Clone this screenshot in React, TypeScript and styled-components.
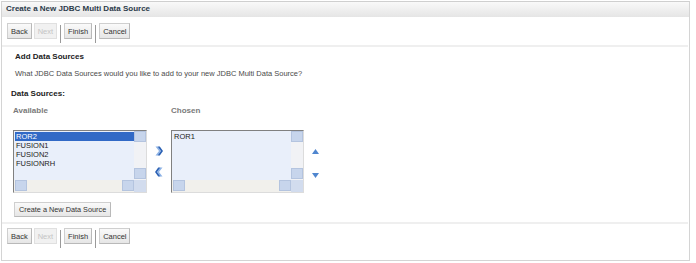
import {} from 'react'
import styled, {createGlobalStyle} from 'styled-components'

const GlobalStyle = createGlobalStyle`
  html, body {
    margin: 0;
    padding: 0;
    background: #ffffff;
  }
  body {
    font-family: "Liberation Sans", Arial, sans-serif;
  }
`

const available = ['ROR2', 'FUSION1', 'FUSION2', 'FUSIONRH']
const chosen = ['ROR1']

const Chevron = ({dir}: {dir: 'left' | 'right'}) => (
  <svg width="8" height="10" viewBox="0 0 8 10">
    <g transform={dir === 'left' ? 'translate(8,0) scale(-1,1)' : undefined}>
      <path d="M0.5 0.5 L4 5 L0.5 9.5 L2.5 9.5 L6 5 L2.5 0.5 Z" fill="#8db3e6" />
      <path d="M2.5 0.5 L6 5 L2.5 9.5 L4.8 9.5 L8 5 L4.8 0.5 Z" fill="#2c62b5" />
    </g>
  </svg>
)

const Triangle = ({dir}: {dir: 'up' | 'down'}) => (
  <svg width="7" height="5" viewBox="0 0 7 5">
    {dir === 'up' ? (
      <path d="M3.5 0 L7 5 L0 5 Z" fill="#4f86cf" />
    ) : (
      <path d="M0 0 L7 0 L3.5 5 Z" fill="#4f86cf" />
    )}
  </svg>
)

const ButtonRow = ({top}: {top: number}) => (
  <ButtonBar $top={top}>
    <Btn>Back</Btn>
    <Btn disabled>Next</Btn>
    <Sep />
    <Btn>Finish</Btn>
    <Sep />
    <Btn>Cancel</Btn>
  </ButtonBar>
)

const ListBox = ({items, selected, width}: {items: string[]; selected?: number; width: number}) => (
  <Box $width={width}>
    <Items>
      {items.map((it, i) => (
        <Item key={it} $selected={i === selected}>
          {it}
        </Item>
      ))}
    </Items>
    <VScroll>
      <ScrollBtn />
      <ScrollBtn />
    </VScroll>
    <HScroll>
      <ScrollBtn />
      <ScrollBtn />
    </HScroll>
    <Corner />
  </Box>
)

const App = () => {
  return (
    <Frame>
      <GlobalStyle />
      <TitleBar>Create a New JDBC Multi Data Source</TitleBar>
      <ButtonRow top={6} />
      <Divider />
      <Content>
        <Heading>Add Data Sources</Heading>
        <Description>What JDBC Data Sources would you like to add to your new JDBC Multi Data Source?</Description>
        <SectionLabel>Data Sources:</SectionLabel>
        <Shuttle>
          <Column>
            <ColLabel>Available</ColLabel>
            <ListBox items={available} selected={0} width={134} />
          </Column>
          <MoveButtons>
            <IconBtn>
              <Chevron dir="right" />
            </IconBtn>
            <IconBtn>
              <Chevron dir="left" />
            </IconBtn>
          </MoveButtons>
          <Column>
            <ColLabel>Chosen</ColLabel>
            <ListBox items={chosen} width={133} />
          </Column>
          <OrderButtons>
            <IconBtn>
              <Triangle dir="up" />
            </IconBtn>
            <IconBtn>
              <Triangle dir="down" />
            </IconBtn>
          </OrderButtons>
        </Shuttle>
        <WideBtn>Create a New Data Source</WideBtn>
      </Content>
      <Divider $top={5} />
      <ButtonRow top={4} />
    </Frame>
  )
}

const Frame = styled('div')`
  box-sizing: border-box;
  margin: 1px 0 0 1px;
  width: 689px;
  height: 260px;
  border: 1px solid #d4d4d4;
  border-top-color: #cfcfcf;
  background: #ffffff;
`
const TitleBar = styled('div')`
  height: 15px;
  line-height: 14px;
  padding-left: 4px;
  font-size: 8px;
  font-weight: bold;
  color: #2b3a4a;
  background: linear-gradient(#f9f9f9, #e5e5e5);
`
const ButtonBar = styled('div')<{$top: number}>`
  display: flex;
  align-items: flex-start;
  gap: 2px;
  padding: ${(p) => p.$top}px 0 6px 5px;
`
const Btn = styled('button')`
  box-sizing: border-box;
  height: 16px;
  padding: 0 3px;
  white-space: nowrap;
  font-family: "Liberation Sans", Arial, sans-serif;
  font-size: 7.5px;
  color: #333333;
  background: linear-gradient(#fafafa, #e6e6e6);
  border: 1px solid #cfcfcf;
  border-right-color: #b9b9b9;
  border-bottom-color: #b9b9b9;
  &:disabled {
    color: #c4c4c4;
    background: #f1f1f1;
    border-color: #e0e0e0;
  }
`
const Sep = styled('span')`
  width: 1px;
  height: 18px;
  margin: 2px 1px -4px;
  background: #9a9a9a;
`
const Divider = styled('div')<{$top?: number}>`
  height: 2px;
  margin-top: ${(p) => p.$top ?? 0}px;
  margin-right: 1px;
  background: #efefef;
`
const Content = styled('div')`
  padding-left: 9px;
  display: flex;
  flex-direction: column;
  align-items: flex-start;
`
const Heading = styled('div')`
  margin: 5px 0 0 4px;
  height: 10px;
  line-height: 10px;
  font-size: 8px;
  font-weight: bold;
  color: #222222;
`
const Description = styled('div')`
  margin: 7px 0 0 4px;
  height: 10px;
  line-height: 10px;
  font-size: 7.5px;
  color: #4a4a4a;
`
const SectionLabel = styled('div')`
  margin-top: 10px;
  height: 10px;
  line-height: 10px;
  font-size: 8px;
  font-weight: bold;
  color: #222222;
`
const Shuttle = styled('div')`
  display: flex;
  align-items: flex-start;
  margin: 7px 0 0 2px;
`
const Column = styled('div')`
  display: flex;
  flex-direction: column;
`
const ColLabel = styled('div')`
  height: 10px;
  line-height: 10px;
  font-size: 8px;
  font-weight: bold;
  color: #7a7a7a;
  margin-bottom: 14px;
`
const Box = styled('div')<{$width: number}>`
  box-sizing: border-box;
  width: ${(p) => p.$width}px;
  height: 63px;
  display: grid;
  grid-template-columns: 1fr 12px;
  grid-template-rows: 1fr 12px;
  background: #e9effa;
  border: 1px solid #dcdcdc;
  border-top-color: #808080;
  border-left-color: #808080;
`
const Items = styled('div')`
  padding: 1px 0 0 1px;
  overflow: hidden;
`
const Item = styled('div')<{$selected?: boolean}>`
  height: 9px;
  line-height: 9px;
  padding-left: 1px;
  font-size: 7.5px;
  color: ${(p) => (p.$selected ? '#ffffff' : '#222222')};
  background: ${(p) => (p.$selected ? '#3169c6' : 'transparent')};
`
const VScroll = styled('div')`
  display: flex;
  flex-direction: column;
  justify-content: space-between;
  padding-bottom: 1px;
  background: #f1f2f5;
`
const HScroll = styled('div')`
  display: flex;
  justify-content: space-between;
  padding-left: 1px;
  background: #f1f0ec;
`
const ScrollBtn = styled('span')`
  box-sizing: border-box;
  width: 12px;
  height: 11px;
  background: #c7d5ec;
  border: 1px solid #b4c4df;
`
const Corner = styled('span')`
  background: #d2dcee;
`
const MoveButtons = styled('div')`
  display: flex;
  flex-direction: column;
  align-items: center;
  gap: 11px;
  width: 24px;
  padding-top: 40px;
`
const OrderButtons = styled('div')`
  display: flex;
  flex-direction: column;
  gap: 19px;
  margin-left: 8px;
  padding-top: 43px;
`
const IconBtn = styled('span')`
  display: flex;
  cursor: pointer;
`
const WideBtn = styled(Btn)`
  margin: 9px 0 0 3px;
  height: 15px;
  padding: 0 4px;
  font-size: 7.3px;
`

export default App
